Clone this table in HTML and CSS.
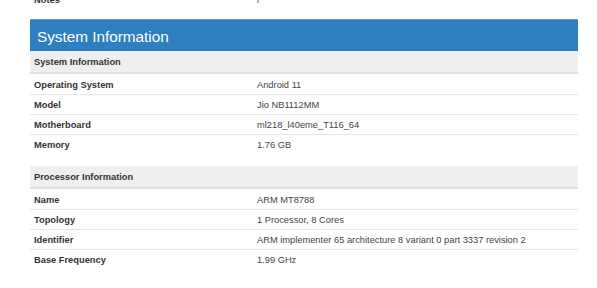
FILE: index.html
```html
<!DOCTYPE html>
<html>
<head>
<meta charset="utf-8">
<link rel="stylesheet" href="styles.css">
</head>
<body>
<div class="page">
  <div class="row cut">
    <div class="label">Notes</div>
    <div class="value">i</div>
  </div>
  <section class="card">
    <div class="title">System Information</div>
    <div class="sub">System Information</div>
    <div class="row"><div class="label">Operating System</div><div class="value">Android 11</div></div>
    <div class="row"><div class="label">Model</div><div class="value">Jio NB1112MM</div></div>
    <div class="row"><div class="label">Motherboard</div><div class="value">ml218_l40eme_T116_64</div></div>
    <div class="row"><div class="label">Memory</div><div class="value">1.76 GB</div></div>
    <div class="spacer"></div>
    <div class="sub">Processor Information</div>
    <div class="row"><div class="label">Name</div><div class="value">ARM MT8788</div></div>
    <div class="row"><div class="label">Topology</div><div class="value">1 Processor, 8 Cores</div></div>
    <div class="row"><div class="label">Identifier</div><div class="value">ARM implementer 65 architecture 8 variant 0 part 3337 revision 2</div></div>
    <div class="row"><div class="label">Base Frequency</div><div class="value">1.99 GHz</div></div>
  </section>
</div>
</body>
</html>
```
FILE: styles.css
```css
html, body {
  margin: 0;
  padding: 0;
  background: #ffffff;
}
body {
  font-family: "Liberation Sans", Arial, sans-serif;
  color: #333;
  overflow: hidden;
}
.page {
  width: 548px;
  margin-left: 30px;
}
.cut {
  margin-top: -11px;
}
.card {
  margin-top: 10px;
}
.title {
  background: #2e7ec0;
  color: #fff;
  height: 32px;
  line-height: 34px;
  font-size: 15.3px;
  padding-left: 7px;
  border-top: 1px solid #5aa0d6;
  box-sizing: border-box;
}
.sub {
  background: #efefef;
  height: 23px;
  line-height: 23px;
  font-size: 9.3px;
  font-weight: bold;
  padding-left: 4px;
  border-bottom: 2px solid #e0e0e0;
  box-sizing: border-box;
  color: #333;
}
.row {
  display: flex;
  height: 20px;
  line-height: 22px;
  font-size: 9.3px;
  box-sizing: border-box;
}
.row + .row {
  border-top: 1px solid #e6e6e6;
  line-height: 21px;
}
.label {
  width: 223px;
  padding-left: 4px;
  font-weight: bold;
  color: #333;
}
.value {
  flex: 1;
  color: #444;
}
.spacer {
  height: 12px;
}
```
